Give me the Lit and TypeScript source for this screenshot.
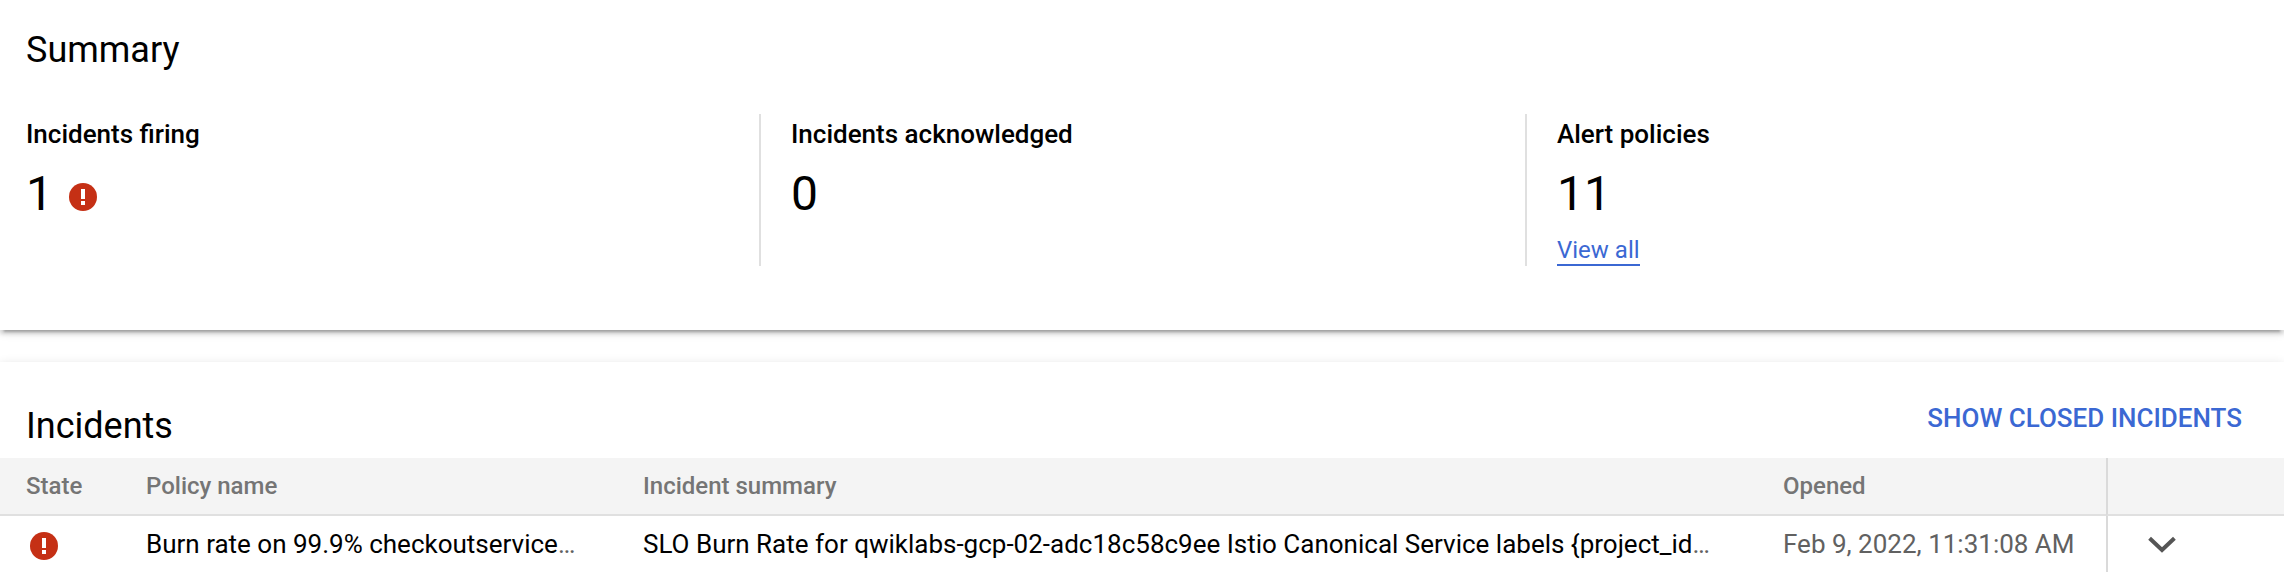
import { LitElement, html, css, svg } from "lit";
import { customElement, property } from "lit/decorators.js";

interface Incident {
  policy: string;
  summary: string;
  opened: string;
}

const incidents: Incident[] = [
  {
    policy: "Burn rate on 99.9% checkoutservice",
    summary: "SLO Burn Rate for qwiklabs-gcp-02-adc18c58c9ee Istio Canonical Service labels {project_id",
    opened: "Feb 9, 2022, 11:31:08 AM",
  },
];

@customElement("alert-icon")
export class AlertIcon extends LitElement {
  static styles = css`
    :host {
      display: inline-flex;
    }
    .icon {
      display: block;
      width: 28px;
      height: 28px;
    }
  `;

  render() {
    return html`<svg class="icon" viewBox="0 0 28 28" role="img" aria-label="Firing">
      ${svg`<circle cx="14" cy="14" r="14" fill="#c53015"></circle>
      <path d="M12 6h4v10h-4zM12 18h4v4h-4z" fill="#fff"></path>`}
    </svg>`;
  }
}

@customElement("summary-stat")
export class SummaryStat extends LitElement {
  @property() label = "";
  @property({ type: Number }) value = 0;

  static styles = css`
    :host {
      display: block;
      box-sizing: border-box;
      min-height: 152px;
    }
    .label {
      margin: 0;
      padding-top: 4px;
      font-size: 26px;
      font-weight: 500;
      line-height: 32px;
    }
    .row {
      display: flex;
      align-items: center;
      gap: 16px;
      margin: 16px 0 14px;
      font-size: 48px;
      line-height: 56px;
    }
    .row ::slotted(*) {
      padding-top: 6px;
    }
  `;

  render() {
    return html`
      <h3 class="label">${this.label}</h3>
      <div class="row"><span>${this.value}</span><slot name="icon"></slot></div>
      <slot></slot>
    `;
  }
}

@customElement("app-root")
export class AppRoot extends LitElement {
  static styles = css`
    :host {
      display: block;
      color: #000;
      background: #fff;
      font-family: Roboto, "Liberation Sans", sans-serif;
      font-size: 26px;
      line-height: 32px;
    }
    .card {
      background: #fff;
      box-shadow: 0 6px 2px -4px rgba(0, 0, 0, 0.2), 0 4px 4px rgba(0, 0, 0, 0.14),
        0 2px 10px rgba(0, 0, 0, 0.12);
    }
    .summary {
      padding: 28px 0 64px;
      margin-bottom: 32px;
    }
    .title {
      margin: 0;
      font-size: 36px;
      font-weight: 400;
      line-height: 44px;
    }
    .summary .title {
      padding: 0 26px;
      margin-bottom: 42px;
    }
    .stats {
      display: grid;
      grid-template-columns: 759fr 766fr 759fr;
    }
    .stat {
      border-left: 2px solid #e0e0e0;
      padding-left: 30px;
    }
    .stat.first {
      border-left: 0;
      padding-left: 26px;
    }
    .link {
      display: block;
      width: fit-content;
      color: #3b68d3;
      border-bottom: 2px solid currentColor;
      font-size: 24px;
      line-height: 28px;
      text-decoration: none;
    }
    .incidents {
      padding-top: 34px;
    }
    .head {
      display: flex;
      justify-content: space-between;
      align-items: flex-start;
      padding: 0 42px 10px 26px;
    }
    .head .title {
      padding-top: 8px;
    }
    .toggle {
      padding: 6px 0;
      border: 0;
      background: none;
      color: #3b68d3;
      font: 500 26px/32px Roboto, "Liberation Sans", sans-serif;
      text-transform: uppercase;
      cursor: pointer;
    }
    .table {
      width: 100%;
      table-layout: fixed;
      border-collapse: separate;
      border-spacing: 0;
    }
    .state { width: 146px; }
    .policy { width: 497px; }
    .opened { width: 323px; }
    .actions { width: 178px; }
    th {
      box-sizing: border-box;
      height: 58px;
      padding: 0;
      background: #f4f4f4;
      border-bottom: 2px solid #e0e0e0;
      color: #757575;
      font-size: 24px;
      font-weight: 500;
      text-align: left;
    }
    td {
      box-sizing: border-box;
      height: 56px;
      padding: 0;
      color: #616161;
      white-space: nowrap;
    }
    .lead {
      padding-left: 26px;
    }
    .firing {
      padding: 4px 0 0 30px;
      line-height: 0;
    }
    .last {
      border-left: 2px solid #dadada;
    }
    .name {
      color: #000;
      text-decoration: none;
    }
    .expand {
      display: block;
      margin-left: 28px;
      padding: 0 8px;
      border: 0;
      background: none;
      cursor: pointer;
    }
    .chevron {
      display: block;
      width: 36px;
      height: 36px;
    }
  `;

  render() {
    return html`
      <section class="card summary">
        <h2 class="title">Summary</h2>
        <div class="stats">
          <summary-stat class="stat first" label="Incidents firing" .value=${1}>
            <alert-icon slot="icon"></alert-icon>
          </summary-stat>
          <summary-stat class="stat" label="Incidents acknowledged" .value=${0}></summary-stat>
          <summary-stat class="stat" label="Alert policies" .value=${11}>
            <a class="link" href="#policies">View all</a>
          </summary-stat>
        </div>
      </section>
      <section class="card incidents">
        <div class="head">
          <h2 class="title">Incidents</h2>
          <button class="toggle" type="button">Show closed incidents</button>
        </div>
        <table class="table">
          <colgroup>
            <col class="state" />
            <col class="policy" />
            <col />
            <col class="opened" />
            <col class="actions" />
          </colgroup>
          <thead>
            <tr>
              <th class="lead" scope="col">State</th>
              <th scope="col">Policy name</th>
              <th scope="col">Incident summary</th>
              <th scope="col">Opened</th>
              <th class="last" scope="col"></th>
            </tr>
          </thead>
          <tbody>
            ${incidents.map(
              (item) => html`<tr>
                <td class="firing"><alert-icon></alert-icon></td>
                <td><a class="name" href="#policy">${item.policy}</a>…</td>
                <td><a class="name" href="#incident">${item.summary}</a>…</td>
                <td>${item.opened}</td>
                <td class="last">
                  <button class="expand" type="button" aria-label="Expand">
                    <svg class="chevron" viewBox="0 0 36 36" aria-hidden="true">
                      <path d="M5.6 12.2 18 24 30.4 12.2" fill="none" stroke="#555" stroke-width="4"></path>
                    </svg>
                  </button>
                </td>
              </tr>`
            )}
          </tbody>
        </table>
      </section>
    `;
  }
}
